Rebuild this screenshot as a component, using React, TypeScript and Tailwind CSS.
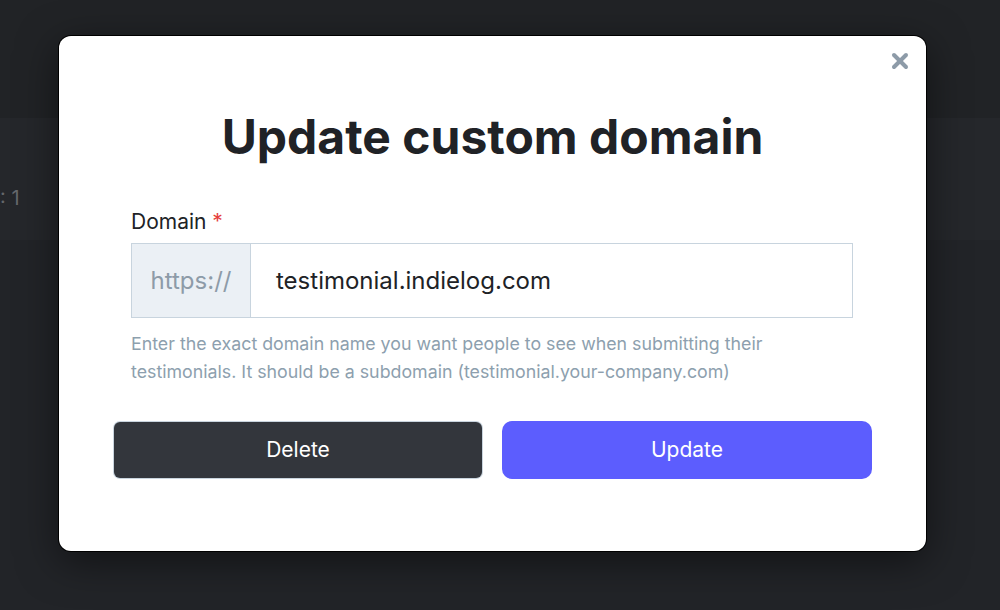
import { X } from 'lucide-react';

export default function App() {
  return (
    <div
      className="relative w-[1000px] h-[610px] overflow-hidden bg-[#222428]"
      style={{ fontFamily: 'Inter, "Noto Sans", sans-serif' }}
    >
      {/* Page behind the dialog */}
      <div className="h-[118px] bg-[#212326]" />
      <div className="h-[122px] bg-[#25272b] pt-[66px]">
        <span className="block text-[20px] leading-[28px] text-[#65686d]">: 1</span>
      </div>

      {/* Dialog */}
      <div className="absolute left-[59px] top-[36px] w-[867px] h-[515px] rounded-[12px] bg-white ring-1 ring-black shadow-[0_10px_40px_rgba(0,0,0,0.5)]">
        <button className="absolute right-[14px] top-[13px] text-[#8d9ba8]" aria-label="Close">
          <X className="w-[24px] h-[24px]" strokeWidth={4} />
        </button>

        <h2 className="pt-[73px] text-center text-[48px] leading-[56px] font-bold text-[#202226]">
          Update custom domain
        </h2>

        <div className="px-[72px] pt-[43px]">
          <label className="block text-[21px] leading-[28px] text-[#202226]">
            Domain <span className="text-[#e53e3e]">*</span>
          </label>
          <div className="mt-[7px] flex h-[75px] w-[722px]">
            <div className="flex w-[120px] items-center justify-center border border-[#c8d4de] bg-[#ebf0f5] text-[24px] text-[#8d9ba8]">
              https://
            </div>
            <div className="flex flex-1 items-center border border-l-0 border-[#c8d4de] px-[25px] text-[24px] text-[#202226]">
              testimonial.indielog.com
            </div>
          </div>
          <p className="mt-[12px] w-[700px] text-[17.8px] leading-[28px] text-[#8d9fae]">
            Enter the exact domain name you want people to see when submitting their testimonials. It should be a subdomain (testimonial.your-company.com)
          </p>
        </div>

        <div className="mt-[36px] flex gap-[20px] pl-[55px] pr-[54px]">
          <button className="h-[56px] w-[368px] rounded-[6px] bg-[#33363c] text-[21px] text-white ring-1 ring-[#c9d4de]">
            Delete
          </button>
          <button className="h-[58px] flex-1 -mt-[1px] rounded-[10px] bg-[#5c5dfe] text-[21px] text-white">
            Update
          </button>
        </div>
      </div>
    </div>
  );
}
